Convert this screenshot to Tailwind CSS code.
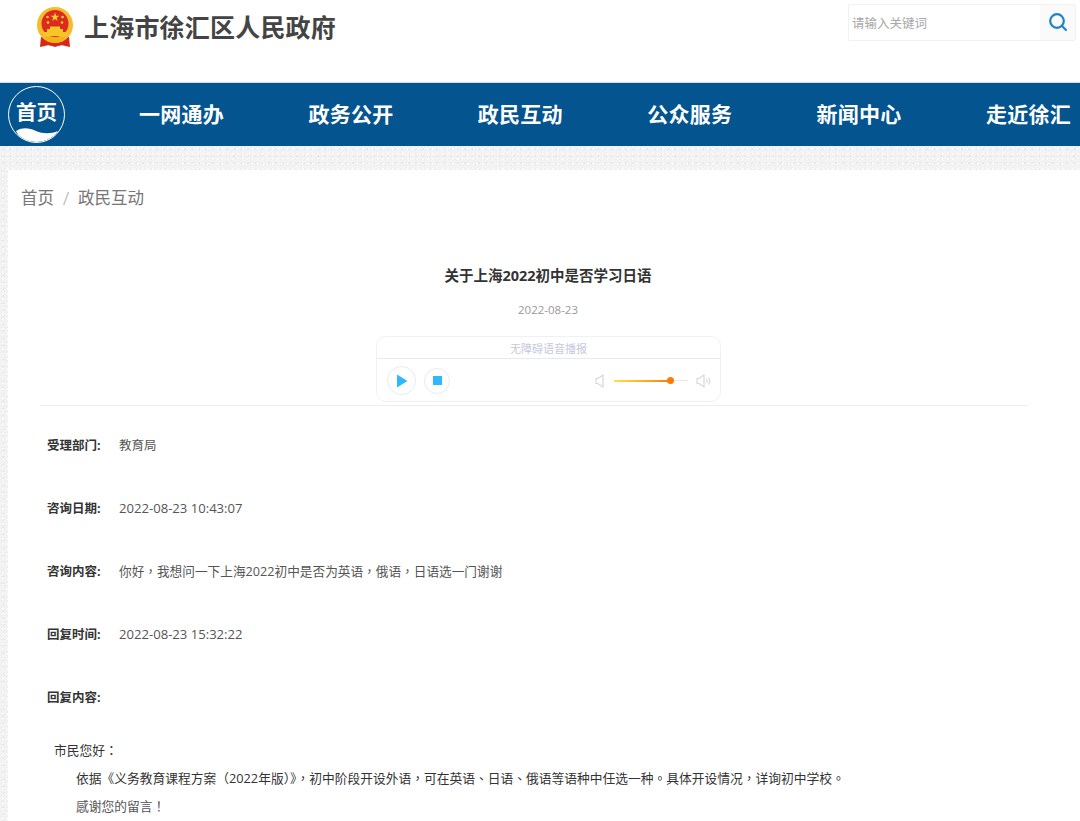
<!DOCTYPE html>
<html lang="zh-CN"><head><meta charset="utf-8">
<script src="https://cdn.jsdelivr.net/npm/@tailwindcss/browser@4"></script>
<title>关于上海2022初中是否学习日语</title></head>
<body class="bg-white font-['Open_Sans','Noto_Sans_CJK_TC',sans-serif] w-[1080px] h-[821px] overflow-hidden">
<header class="h-[82px] flex justify-between items-start">
  <div class="flex items-center pl-[37px] pt-[7px] gap-[11px]">
    <svg width="36" height="40" viewBox="0 0 36 40">
      <path d="M4 30 L3 40 L12 38 L18 40 L24 38 L33 40 L32 30Z" fill="#d8261c"/>
      <circle cx="18" cy="18" r="18" fill="#f3bd2e"/>
      <circle cx="18" cy="16.500" r="13.500" fill="#dc2a1e"/>
      <path d="M18 5.500l1.100 3.200h3.300l-2.700 2 1 3.200-2.700-2-2.700 2 1-3.200-2.700-2h3.300z" fill="#f8d22c"/>
      <circle cx="10.500" cy="10" r="1.300" fill="#f8d22c"/><circle cx="25.500" cy="10" r="1.300" fill="#f8d22c"/><circle cx="11" cy="15.500" r="1.300" fill="#f8d22c"/><circle cx="25" cy="15.500" r="1.300" fill="#f8d22c"/>
      <path d="M6 25h24v4H6z M10 22h16v3H10z M13 19.500h10v2.500H13z" fill="#f6c52a"/>
      <path d="M8 30h20l-3 5H11z" fill="#f3b416"/>
      <path d="M12 36h12v2.500H12z" fill="#d8261c"/>
    </svg>
    <div class="text-[25px] leading-[40px] font-bold text-[#444] tracking-[0.2px] whitespace-nowrap">上海市徐汇区人民政府</div>
  </div>
  <div class="mt-[4px] mr-[4px] w-[228px] h-[37px] border border-[#f1f1f1] flex rounded-[2px]">
    <div class="flex-1 pl-[3px] text-[12.500px] leading-[37px] text-[#a8a8a8]">请输入关键词</div>
    <div class="w-[35px] bg-[#fafafa] flex items-center justify-center pb-[2px]">
      <svg width="20" height="20" viewBox="0 0 20 20" fill="none" stroke="#1f82c8" stroke-width="2.200" stroke-linecap="round"><circle cx="9" cy="9" r="6.800"/><path d="M14 14l4 4"/></svg>
    </div>
  </div>
</header>
<nav class="h-[64px] bg-[#03548f] border-t border-[#d5dde4] flex items-center pb-[2px] relative">
  <div class="absolute left-[8px] top-[3px] w-[57px] h-[57px] rounded-full border border-white bg-[#03548f] overflow-hidden text-center">
    <div class="text-[20.500px] leading-[24px] pt-[13px] font-bold text-white">首页</div>
    <svg class="absolute left-0 bottom-0" width="55" height="15" viewBox="0 0 55 15"><path d="M7 4 C14 0 20 1 27 4 C34 7 42 7 49 4 C45 11 36 15 27 15 C18 15 10 11 7 4Z" fill="#fff"/></svg>
  </div>
  <div class="flex pl-[139px] text-[21px] leading-[30px] font-bold text-white whitespace-nowrap tracking-[0.25px]">
    <span class="w-[169.400px]">一网通办</span><span class="w-[169.400px]">政务公开</span><span class="w-[169.400px]">政民互动</span><span class="w-[169.400px]">公众服务</span><span class="w-[169.400px]">新闻中心</span><span class="w-[84px]">走近徐汇</span>
  </div>
</nav>
<div class="pl-[8px] pt-[24px] bg-[#f3f3f3] bg-[radial-gradient(#e8e8e8_1px,transparent_1px),radial-gradient(#fbfbfb_1px,transparent_1px),radial-gradient(#ebebeb_1px,transparent_1px)] bg-[length:7px_7px,5px_5px,3px_3px]">
<main class="bg-white h-[651px] overflow-hidden">
  <div class="pl-[13px] pt-[16px] text-[16.500px] leading-[24px] text-[#777] flex">
    <span>首页</span><span class="w-[24px] text-center text-[18px] text-[#c4c4c4]">/</span><span>政民互动</span>
  </div>
  <h1 class="mt-[55px] pl-[8px] text-center text-[14.500px] leading-[22px] font-bold text-[#333]">关于上海2022初中是否学习日语</h1>
  <div class="mt-[14px] pl-[8px] text-center text-[11.500px] leading-[18px] text-[#999]">2022-08-23</div>
  <div class="ml-[368px] mt-[17px] w-[345px] h-[66px] rounded-[10px] border border-[#f0f1f8]">
    <div class="h-[22px] border-b border-[#e6e8f3] text-center text-[11px] leading-[24px] text-[#c5c8de]">无障碍语音播报</div>
    <div class="flex items-center h-[42px] pl-[10px] pr-[9px] pt-[1px]">
      <div class="w-[29px] h-[29px] rounded-full border border-[#e8eaf5] flex items-center justify-center">
        <svg width="12" height="14" viewBox="0 0 12 14"><path d="M1 0.500l10.500 6.500-10.500 6.500z" fill="#2eb8ff"/></svg>
      </div>
      <div class="ml-[8px] w-[26px] h-[26px] rounded-full border border-[#e8eaf5] flex items-center justify-center"><div class="w-[9px] h-[9px] bg-[#2eb8ff]"></div></div>
      <svg class="ml-auto" width="10" height="14" viewBox="0 0 10 14" fill="none" stroke="#d8d8d8" stroke-width="1.200"><path d="M8 1L3 4.500H1v5h2L8 13z"/></svg>
      <div class="ml-[9px] w-[74px] h-[1px] bg-[#e6e6e6] relative">
        <div class="absolute left-0 top-0 w-[56px] h-[1.500px] bg-gradient-to-r from-[#ffdf4d] to-[#ff7a00]"></div>
        <div class="absolute left-[53px] top-[-3px] w-[7px] h-[7px] rounded-full bg-[#ff7a00]"></div>
      </div>
      <svg class="ml-[8px]" width="15" height="14" viewBox="0 0 15 14" fill="none" stroke="#d8d8d8" stroke-width="1.200"><path d="M8 1L3 4.500H1v5h2L8 13z"/><path d="M10.500 5c.8 1.200.8 2.800 0 4M12.500 3.500c1.500 2 1.500 5 0 7"/></svg>
    </div>
  </div>
  <div class="ml-[32px] mt-[3px] border-t border-[#eeeeee] w-[988px]"></div>
  <div lang="zh-TW" class="pl-[39px] pt-[22px] text-[12.500px] text-[#555]">
    <div class="flex h-[63px] leading-[35px]"><b class="w-[72px] text-[#333]">受理部门:</b><span>教育局</span></div>
    <div class="flex h-[63px] leading-[35px]"><b class="w-[72px] text-[#333]">咨询日期:</b><span class="text-[13.100px]">2022-08-23 10:43:07</span></div>
    <div class="flex h-[63px] leading-[35px]"><b class="w-[72px] text-[#333]">咨询内容:</b><span class="text-[12.670px]">你好，我想问一下上海2022初中是否为英语，俄语，日语选一门谢谢</span></div>
    <div class="flex h-[63px] leading-[35px]"><b class="w-[72px] text-[#333]">回复时间:</b><span class="text-[13.100px]">2022-08-23 15:32:22</span></div>
    <div class="flex h-[56px] leading-[35px]"><b class="w-[72px] text-[#333]">回复内容:</b></div>
  </div>
  <div lang="zh-TW" class="text-[12.750px] leading-[28px] text-[#333] pl-[46px]">
    <p>市民您好：</p>
    <p class="pl-[22px] whitespace-nowrap">依据《义务教育课程方案（2022年版）》，初中阶段开设外语，可在英语、日语、俄语等语种中任选一种。具体开设情况，详询初中学校。</p>
    <p class="pl-[22px] text-[#555]">感谢您的留言！</p>
  </div>
</main>
</div>
</body></html>
